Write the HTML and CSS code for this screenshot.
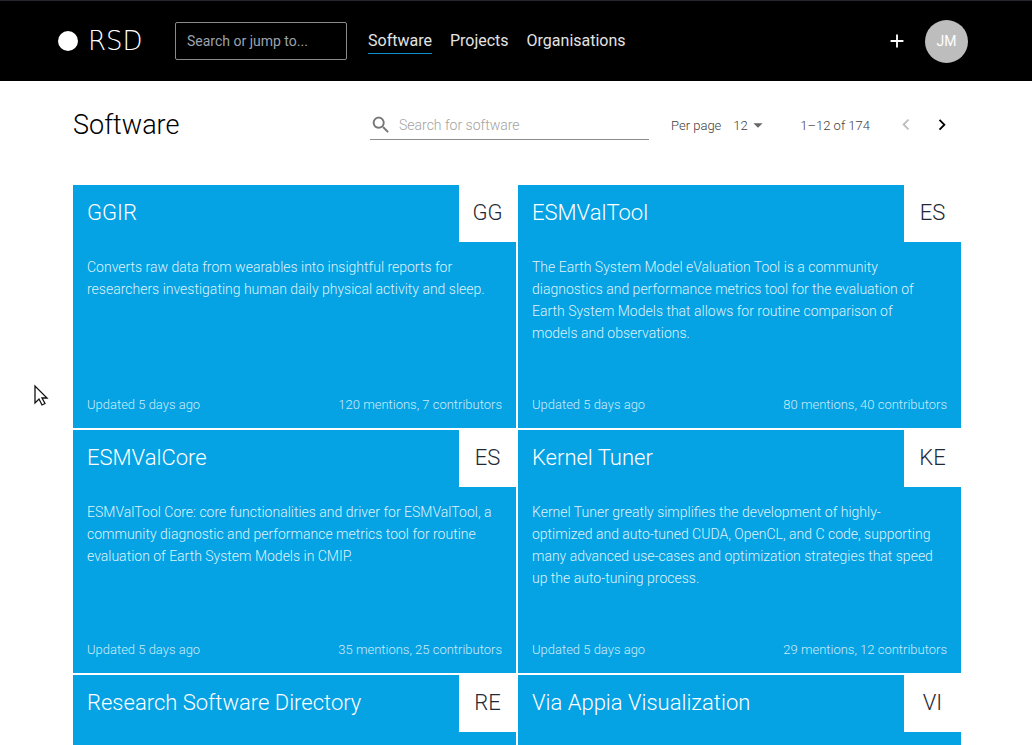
FILE: index.html
```html
<!DOCTYPE html>
<html lang="en">
<head>
<meta charset="utf-8">
<meta name="viewport" content="width=device-width, initial-scale=1">
<title>Software | Research Software Directory</title>
<link rel="stylesheet" href="styles.css">
</head>
<body>
<header class="topbar">
  <a class="logo" href="#" aria-label="RSD home">
    <span class="logo-dot"></span>
    <span class="logo-text">RSD</span>
  </a>
  <input class="jump" type="search" placeholder="Search or jump to..." aria-label="Search or jump to">
  <nav class="nav">
    <a class="nav-link active" href="#">Software</a>
    <a class="nav-link" href="#">Projects</a>
    <a class="nav-link" href="#">Organisations</a>
  </nav>
  <button class="add" type="button" aria-label="Add">
    <svg width="22" height="22" viewBox="0 0 24 24"><path fill="currentColor" d="M19 13h-6v6h-2v-6H5v-2h6V5h2v6h6v2z"/></svg>
  </button>
  <button class="avatar" type="button" aria-label="User menu">JM</button>
</header>
<main class="page">
  <div class="toolbar">
    <h1 class="title">Software</h1>
    <label class="search">
      <svg width="22" height="22" viewBox="0 0 24 24"><path fill="currentColor" d="M15.5 14h-.79l-.28-.27C15.41 12.59 16 11.11 16 9.5 16 5.91 13.09 3 9.5 3S3 5.91 3 9.5 5.91 16 9.5 16c1.61 0 3.09-.59 4.23-1.57l.27.28v.79l5 4.99L20.49 19l-4.99-5zm-6 0C7.01 14 5 11.99 5 9.5S7.01 5 9.5 5 14 7.01 14 9.5 11.99 14 9.5 14z"/></svg>
      <input class="search-input" type="search" placeholder="Search for software" aria-label="Search for software">
    </label>
    <label class="per-page" for="rows">Per page</label>
    <span class="select-wrap">
      <select class="rows" id="rows"><option>12</option><option>24</option><option>48</option></select>
      <svg class="caret" width="22" height="22" viewBox="0 0 24 24"><path fill="currentColor" d="M7 10l5 5 5-5z"/></svg>
    </span>
    <span class="range">1–12 of 174</span>
    <span class="pager">
      <button class="page-btn" type="button" disabled aria-label="Previous page"><svg width="22" height="22" viewBox="0 0 24 24"><path fill="currentColor" d="M15.41 16.09l-4.58-4.59 4.58-4.59L14 5.5l-6 6 6 6z"/></svg></button>
      <button class="page-btn" type="button" aria-label="Next page"><svg width="22" height="22" viewBox="0 0 24 24"><path fill="currentColor" d="M8.59 16.34l4.58-4.59-4.58-4.59L10 5.75l6 6-6 6z"/></svg></button>
    </span>
  </div>
  <section class="grid">
    <a class="card" href="#">
      <div class="card-head"><h2 class="card-title">GGIR</h2><span class="badge">GG</span></div>
      <p class="card-text">Converts raw data from wearables into insightful reports for researchers investigating human daily physical activity and sleep.</p>
      <div class="card-foot"><span>Updated 5 days ago</span><span>120 mentions, 7 contributors</span></div>
    </a>
    <a class="card" href="#">
      <div class="card-head"><h2 class="card-title">ESMValTool</h2><span class="badge">ES</span></div>
      <p class="card-text">The Earth System Model eValuation Tool is a community diagnostics and performance metrics tool for the evaluation of Earth System Models that allows for routine comparison of models and observations.</p>
      <div class="card-foot"><span>Updated 5 days ago</span><span>80 mentions, 40 contributors</span></div>
    </a>
    <a class="card" href="#">
      <div class="card-head"><h2 class="card-title">ESMValCore</h2><span class="badge">ES</span></div>
      <p class="card-text">ESMValTool Core: core functionalities and driver for ESMValTool, a community diagnostic and performance metrics tool for routine evaluation of Earth System Models in CMIP.</p>
      <div class="card-foot"><span>Updated 5 days ago</span><span>35 mentions, 25 contributors</span></div>
    </a>
    <a class="card" href="#">
      <div class="card-head"><h2 class="card-title">Kernel Tuner</h2><span class="badge">KE</span></div>
      <p class="card-text">Kernel Tuner greatly simplifies the development of highly-optimized and auto-tuned CUDA, OpenCL, and C code, supporting many advanced use-cases and optimization strategies that speed up the auto-tuning process.</p>
      <div class="card-foot"><span>Updated 5 days ago</span><span>29 mentions, 12 contributors</span></div>
    </a>
    <a class="card" href="#">
      <div class="card-head"><h2 class="card-title">Research Software Directory</h2><span class="badge">RE</span></div>
    </a>
    <a class="card" href="#">
      <div class="card-head"><h2 class="card-title">Via Appia Visualization</h2><span class="badge">VI</span></div>
    </a>
  </section>
</main>
<svg class="cursor" width="16" height="24" viewBox="0 0 16 24" aria-hidden="true"><path d="M2 2v17l4-4 3 6 3-1.500-3-5.500h5z" fill="#fff" stroke="#111" stroke-width="1.300"/></svg>
</body>
</html>
```
FILE: styles.css
```css
* { box-sizing: border-box; }
body {
  margin: 0;
  height: 100vh;
  overflow: hidden;
  background: #fff;
  color: #000;
  font-family: Roboto, "Liberation Sans", sans-serif;
  font-size: 14px;
  font-weight: 300;
}
a { color: inherit; text-decoration: none; }
svg { display: block; flex: none; }
button { padding: 0; border: 0; background: none; font: inherit; color: inherit; }
input, select { font: inherit; }

.topbar {
  display: flex;
  align-items: center;
  height: 81px;
  padding: 0 64px 0 58px;
  background: #000;
  border-top: 1px solid #26262e;
  color: #fff;
}
.logo { display: flex; align-items: center; gap: 10px; width: 117px; }
.logo-dot { width: 20px; height: 20px; border-radius: 50%; background: #fff; }
.logo-text { font-family: "DejaVu Sans Light", "DejaVu Sans", sans-serif; font-size: 26px; line-height: 32px; font-weight: 200; }
.jump {
  width: 172px;
  height: 38px;
  padding: 0 11px;
  border: 1px solid #8a8a8a;
  border-radius: 2px;
  background: #000;
  color: #fff;
  font-weight: 400;
  appearance: none;
}
.jump::placeholder { color: #9ca3af; }
.nav { display: flex; gap: 18px; margin-left: 21px; font-size: 16px; font-weight: 400; color: #e3e3e3; }
.nav-link { line-height: 24px; border-bottom: 1px solid transparent; }
.nav-link.active { border-color: #0a8fd0; }
.add { margin-left: auto; }
.avatar {
  width: 43px;
  height: 43px;
  margin-left: 17px;
  border-radius: 50%;
  background: #bdbdbd;
  color: #fff;
  font-weight: 400;
}

.page { padding: 0 71px 0 73px; }
.toolbar { display: flex; align-items: center; height: 104px; padding-bottom: 16px; }
.title { flex: 1; margin: 0; font-size: 27px; font-weight: 300; }
.search {
  display: flex;
  align-items: center;
  width: 279px;
  height: 29px;
  border-bottom: 1px solid #8c8c8c;
  color: #757575;
}
.search-input {
  flex: 1;
  min-width: 0;
  margin-left: 7px;
  padding: 0;
  border: 0;
  outline: 0;
  font-weight: 300;
  appearance: none;
}
.search-input::placeholder { color: #a3a3a3; }
.per-page, .rows, .range { font-size: 13px; color: #404040; }
.per-page { margin-left: 22px; }
.select-wrap { display: flex; align-items: center; margin-left: 12px; color: #666; }
.rows { width: 24px; margin-right: -10px; padding: 0; border: 0; background: transparent; appearance: none; z-index: 1; }
.range { margin-left: 31px; }
.pager { display: flex; gap: 14px; margin: 0 8px 0 25px; }
.page-btn:disabled { color: #bdbdbd; }

.grid {
  display: grid;
  grid-template-columns: repeat(2, minmax(0, 1fr));
  grid-auto-rows: minmax(243px, auto);
  gap: 2px;
}
.card { display: flex; flex-direction: column; background: #05a2e4; color: #fff; }
.card-head { display: flex; justify-content: space-between; }
.card-title { margin: 0; padding-left: 14px; font-size: 22px; line-height: 56px; font-weight: 300; }
.badge {
  width: 57px;
  height: 57px;
  background: #fff;
  color: #1f2937;
  font-size: 22px;
  line-height: 56px;
  text-align: center;
}
.card-text { flex: 1; margin: 0; padding: 14px 22px 0 14px; line-height: 22px; color: #dff3fc; }
.card-foot {
  display: flex;
  justify-content: space-between;
  padding: 14px;
  font-size: 13px;
  line-height: 18px;
  color: #cdecfa;
}

.cursor { position: absolute; left: 33px; top: 384px; }
```
